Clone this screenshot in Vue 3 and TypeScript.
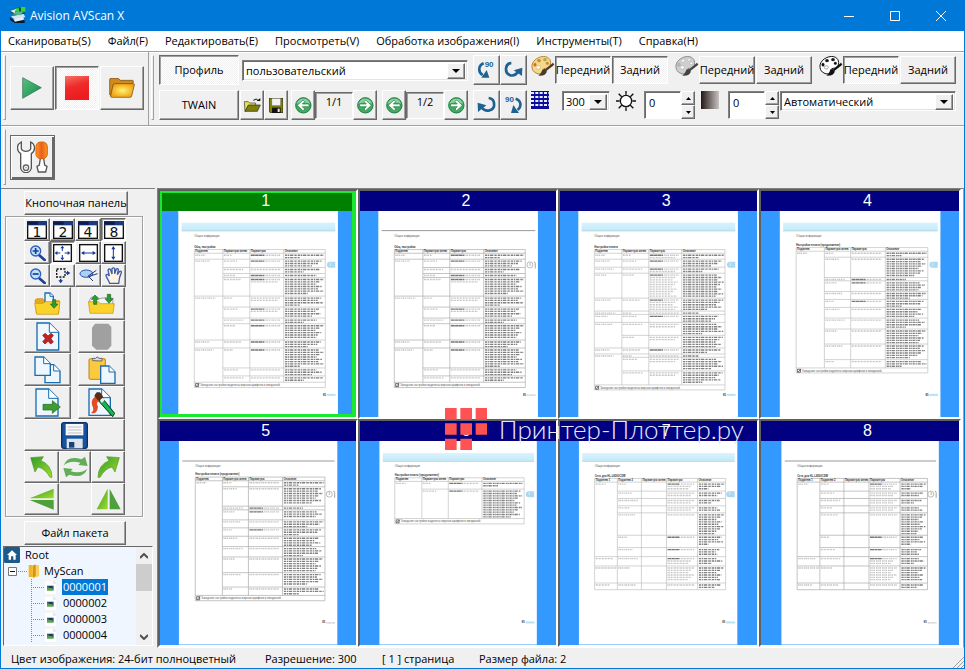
<script setup lang="ts">
import { ref } from 'vue'

interface Icon { w: number; h: number; body: string }
interface Row { y: number; full?: boolean; c3?: number; bold?: boolean }
interface Sheet {
  w: number; h: number; colour: boolean; title: string; titleY: number; infoY: number
  bandY: number; tabY: number; footY: number; cols: number[]; heads: string[]
  rows: Row[]; end: number; note: number
}

const sheetOutline = (x: number, y: number, w: number, h: number, f: number): string =>
  `<path d="M${x} ${y}h${w - f}l${f} ${f}v${h - f}h-${w}z" fill="#eef7ff" stroke="#1b6cae" stroke-width="4"/>` +
  `<path d="M${x + w - f} ${y}v${f}h${f}" fill="#fff" stroke="#1b6cae" stroke-width="3"/>`

const arrowBall = (d: string): string =>
  `<circle cx="25" cy="25" r="23" fill="#45a765" stroke="#17803a" stroke-width="3"/><path d="M5 20a21 21 0 0 1 40 0q-20-9-40 0z" fill="#8fcfa3"/><path d="${d}" fill="#fff" stroke="#17803a" stroke-width="2"/>`

const palette = (base: string, a: string, b: string, c: string, edge: string, brush: string): string =>
  `<path d="M3 34C0 14 26-2 44 2c16 4 18 20 11 30-7 8-18 2-20 10-1 12-12 14-20 9C8 48 4 42 3 34z" fill="${base}" stroke="${edge}" stroke-width="3"/>
  <ellipse cx="24" cy="14" rx="5" ry="4" fill="${a}" stroke="${edge}"/><ellipse cx="42" cy="11" rx="5" ry="4" fill="${b}" stroke="${edge}"/>
  <ellipse cx="12" cy="26" rx="4" ry="5" fill="${c}" stroke="${edge}"/><ellipse cx="49" cy="22" rx="4" ry="4" fill="${a}" stroke="${edge}"/><ellipse cx="22" cy="34" rx="6" ry="5" fill="#fff" stroke="${edge}"/>
  <path d="M66 20L41 41l4 5 25-20z" fill="${brush}"/><path d="M41 39l6 8q-6 14-24 11 8-4 9-10 2-8 9-9z" fill="${brush}" stroke="#222"/>`

const viewIcon = (n: string): Icon => ({
  w: 20, h: 18,
  body: `<rect x="2" y="2" width="56" height="50" fill="#fff" stroke="#111" stroke-width="4"/><rect x="0" y="0" width="60" height="13" fill="#1b3a7c"/><path d="M0 2h32v9H0z" fill="#0c1c50"/><text x="30" y="47" text-anchor="middle" font-family="DejaVu Sans, sans-serif" font-size="42" fill="#111">${n}</text>`,
})

const lens = (sign: string): string =>
  `<path d="M30 30L47 45" stroke="#1d3f9a" stroke-width="8" stroke-linecap="round"/><circle cx="20" cy="18" r="15" fill="#bfe0fb" stroke="#2c5fc0" stroke-width="4"/><path d="${sign}" stroke="#173c9c" stroke-width="5" fill="none"/>`

const openFolder = `<path d="M3 24l6-4h18l5 6h44l-2 38H7z" fill="#e5ab1a" stroke="#c58a0a" stroke-width="2"/>`

const icons: Record<string, Icon> = {
  app: { w: 17, h: 17, body: '<path d="M2 14L24 2h18l6 18-30 6z" fill="#1b4a44"/><path d="M4 12l18-7-5 14z" fill="#d8f4e4"/><path d="M20 4h10v9h-9zM36 0h13v14H36z" fill="#2fd83c"/><path d="M6 28l38-7 5 9-30 10z" fill="#cfe4f6"/><path d="M2 30l12 10h33v8H18L4 40z" fill="#0c1828"/><path d="M14 38l30-7v7l-26 6z" fill="#e9f2fb"/><path d="M10 22l14-10 20 3-12 10z" fill="#59b592"/>' },
  play: { w: 20, h: 22, body: '<defs><linearGradient id="gp" x2="1" y2="1"><stop stop-color="#5cc086"/><stop offset="1" stop-color="#0e8d45"/></linearGradient></defs><path d="M2 2L58 32 2 64z" fill="url(#gp)" stroke="#2f6b48" stroke-width="2"/>' },
  stop: { w: 24, h: 24, body: '<defs><linearGradient id="gs" x2=".3" y2="1"><stop stop-color="#f47565"/><stop offset=".5" stop-color="#ee2a2a"/><stop offset="1" stop-color="#ec1c20"/></linearGradient></defs><path d="M0 0h72v72H0z" fill="url(#gs)"/>' },
  folder: { w: 26, h: 20, body: '<defs><radialGradient id="gf"><stop stop-color="#fff36a"/><stop offset="1" stop-color="#f0a51c"/></radialGradient></defs><path d="M2 4q0-3 4-3h22l6 6h36q4 0 3 5l-4 16L8 56 2 50z" fill="#cf8a1c" stroke="#6b4210" stroke-width="2"/><path d="M16 17h57q4 0 3 4l-8 33q-1 4-5 4H8q-4 0-3-4l7-33q1-4 4-4z" fill="url(#gf)" stroke="#6b4210" stroke-width="2"/>' },
  tools: { w: 31, h: 32, body: '<path d="M13 3C-2 10-2 30 11 38v44q4 13 16 13t16-13V38C56 30 56 10 41 3v21q-4 7-14 7t-14-7z" fill="#fff" stroke="#555" stroke-width="4"/><circle cx="27" cy="80" r="8" fill="#fff" stroke="#666" stroke-width="4"/><circle cx="27" cy="80" r="2" fill="#666"/><path d="M70 52h10l3 20 7 4-4 17H64l-4-17 7-4z" fill="#fff" stroke="#555" stroke-width="4"/><defs><linearGradient id="gt"><stop stop-color="#ff9a16"/><stop offset=".5" stop-color="#ea5c26"/><stop offset="1" stop-color="#ff9a16"/></linearGradient></defs><rect x="57" y="3" width="34" height="50" rx="14" fill="url(#gt)" stroke="#d56810" stroke-width="3"/>' },
  open: { w: 17, h: 14, body: '<path d="M1 11h12l4 4h18v8H15L3 40z" fill="#e6e24e" stroke="#333" stroke-width="2"/><path d="M13 21h36l-9 19H3z" fill="#80800c" stroke="#222" stroke-width="2"/><path d="M28 7q9-8 16 1" fill="none" stroke="#111" stroke-width="3"/><path d="M38 9h11V0z" fill="#111"/>' },
  save: { w: 14, h: 15, body: '<path d="M0 0h42v45H5l-5-5z" fill="#80800c" stroke="#111" stroke-width="2"/><path d="M8 1h27v22H8z" fill="#f2f2f2" stroke="#222"/><path d="M9 29h26v16H9z" fill="#111"/><path d="M26 32h6v10h-6z" fill="#eee"/>' },
  prev: { w: 17, h: 17, body: arrowBall('M7 25L24 9l5 5-7 7h20v8H22l7 7-5 5z') },
  next: { w: 17, h: 17, body: arrowBall('M43 25L26 9l-5 5 7 7H8v8h20l-7 7 5 5z') },
  ccw90: { w: 17, h: 18, body: '<text x="20" y="17" font-family="Liberation Sans, sans-serif" font-weight="bold" font-size="24" fill="#20669a">90</text><path d="M17 7C0 14 0 34 14 42" fill="none" stroke="#1d6293" stroke-width="8"/><path d="M10 50h24L26 27z" fill="#1d6293"/>' },
  cw: { w: 19, h: 18, body: '<path d="M22 6C2 8 0 38 20 43q14 3 22-11" fill="none" stroke="#1d6293" stroke-width="8"/><path d="M29 28l26-8-1 25z" fill="#1d6293"/>' },
  ccw: { w: 19, h: 18, body: '<path d="M35 6C55 8 58 38 37 43q-14 3-22-8" fill="none" stroke="#1d6293" stroke-width="8"/><path d="M28 28L2 20l1 28z" fill="#1d6293"/>' },
  cw90: { w: 17, h: 18, body: '<text x="0" y="17" font-family="Liberation Sans, sans-serif" font-weight="bold" font-size="24" fill="#20669a">90</text><path d="M32 8C50 14 50 32 38 42" fill="none" stroke="#1d6293" stroke-width="8"/><path d="M42 51H18l7-24z" fill="#1d6293"/>' },
  palColour: { w: 24, h: 21, body: palette('#f3d98c', '#e57b2e', '#8ac05c', '#d86a1c', '#b98432', '#4a3a28') },
  palGrey: { w: 24, h: 21, body: palette('#cfcfcf', '#fff', '#f4f4f4', '#bbb', '#8c8c8c', '#444') },
  palMono: { w: 24, h: 21, body: palette('#fff', '#111', '#111', '#111', '#111', '#111') },
  mesh: { w: 18, h: 18, body: '<path d="M0 0h54v54H0z" fill="#0b0b9c"/><path d="M0 6h54M0 18h54M0 30h54M0 42h54" stroke="#e8ecff" stroke-width="6" stroke-dasharray="9 4"/>' },
  sun: { w: 20, h: 20, body: '<circle cx="30" cy="30" r="17" fill="#fff" stroke="#111" stroke-width="4"/><path d="M30 0v11M30 49v11M0 30h11M49 30h11M8 8l9 9M43 43l9 9M52 8l-9 9M17 43l-9 9" stroke="#111" stroke-width="4"/>' },
  zoomIn: { w: 17, h: 16, body: lens('M11 18h18M20 9v18') },
  zoomOut: { w: 17, h: 16, body: lens('M11 18h18') },
  fit: { w: 19, h: 18, body: '<rect x="2" y="2" width="53" height="50" fill="#fff" stroke="#111" stroke-width="4"/><path d="M28 9v12M28 33v12M9 27h13M35 27h13" stroke="#14389c" stroke-width="3"/><path d="M28 5l-6 8h12zM28 49l-6-8h12zM5 27l8-6v12zM52 27l-8-6v12z" fill="#14389c"/>' },
  fitW: { w: 19, h: 18, body: '<rect x="2" y="2" width="53" height="50" fill="#fff" stroke="#111" stroke-width="4"/><path d="M9 27h38" stroke="#14389c" stroke-width="3"/><path d="M6 27l10-6v12zM51 27l-10-6v12z" fill="#14389c"/>' },
  fitH: { w: 19, h: 18, body: '<rect x="2" y="2" width="53" height="50" fill="#fff" stroke="#111" stroke-width="4"/><path d="M28 9v36" stroke="#14389c" stroke-width="3"/><path d="M28 6l-6 10h12zM28 48l-6-10h12z" fill="#14389c"/>' },
  crop: { w: 16, h: 16, body: '<rect x="5" y="3" width="25" height="24" fill="none" stroke="#111" stroke-width="4" stroke-dasharray="6 4"/><path d="M32 15h10M17 32v8" stroke="#14389c" stroke-width="4"/><path d="M46 15l-10-7v14zM17 46l-7-9h14z" fill="#14389c"/>' },
  lasso: { w: 19, h: 13, body: '<ellipse cx="22" cy="14" rx="19" ry="11" fill="#a9d2f6" stroke="#2c4fae" stroke-width="3"/><path d="M26 22l26-18M30 22l26-8M28 22l14 14" stroke="#26357a" stroke-width="3"/>' },
  hand: { w: 18, h: 17, body: '<path d="M14 49C12 40 2 30 3 24q4-5 10 3L9 9q4-6 8 0l4 12V5q4-5 8 0v15l5-14q5-3 6 2l-3 15 7-10q6-2 5 4-6 12-8 32z" fill="#fff3e2" stroke="#3f5ea8" stroke-width="4"/>' },
  insert: { w: 27, h: 24, body: openFolder + sheetOutline(33, 3, 25, 38, 10) + '<path d="M2 34h24l8-5h44l-5 38H8z" fill="#fbd12c" stroke="#c5920c" stroke-width="2"/><path d="M56 23h9v13h7L60 49 49 36h7z" fill="#2f9a33" stroke="#14691c" stroke-width="2"/>' },
  replace: { w: 27, h: 22, body: '<path d="M5 20l6-8 18 0 4 5 18-3 24 2-2 38H8z" fill="#f3f3f3" stroke="#777" stroke-width="2"/><path d="M1 26h30l6 6h42l-4 29H6z" fill="#fbd12c" stroke="#c5920c" stroke-width="2"/><path d="M17 34V19h-7L21 6l11 13h-6v15zM58 4h10v13h7L63 31 51 17h7z" fill="#2f9a33" stroke="#14691c" stroke-width="2"/>' },
  remove: { w: 24, h: 29, body: sheetOutline(3, 3, 65, 81, 28) + '<path d="M20 40l8-6 8 8 9-8 7 6-7 10 7 10-8 6-8-8-9 8-7-7 8-9z" fill="#c42222" stroke="#8d1010" stroke-width="2"/>' },
  blank: { w: 21, h: 27, body: '<path d="M12 2h40l9 10v56L50 80H16L3 68V14z" fill="#a0a0a0"/>' },
  copy: { w: 27, h: 28, body: sheetOutline(33, 26, 45, 54, 19) + sheetOutline(3, 3, 46, 55, 20) },
  paste: { w: 28, h: 28, body: '<rect x="3" y="8" width="49" height="62" rx="4" fill="#fbc93e" stroke="#b88418" stroke-width="3"/><path d="M14 14V7h9q4-9 10 0h9v8z" fill="#ddd" stroke="#666" stroke-width="3"/>' + sheetOutline(38, 30, 43, 52, 18) },
  exportPage: { w: 26, h: 29, body: sheetOutline(3, 3, 66, 81, 28) + '<path d="M24 49h28V38l24 19-24 19V66H24z" fill="#3f9c31" stroke="#1e6a1b" stroke-width="2"/>' },
  paint: { w: 27, h: 29, body: sheetOutline(3, 3, 64, 79, 26) + '<path d="M9 75q12-9 3-24-4-22 16-27l9 12q-16 7-7 20-3 24-21 19z" fill="#e54b1e"/><path d="M26 14l10 0 9 14-12 10-13-14z" fill="#5f2b12" stroke="#222" stroke-width="2"/><path d="M43 30l37 46-6 10-42-47z" fill="#19b553" stroke="#0a3d1c" stroke-width="3"/><path d="M36 36l8-7 6 7-9 9z" fill="#eee"/>' },
  disk: { w: 27, h: 27, body: '<rect x="2" y="2" width="77" height="77" rx="7" fill="#1653a0" stroke="#0d2f66" stroke-width="4"/><path d="M14 6h53v34H14z" fill="#f8f8f8"/><path d="M20 15h42M20 24h42M20 33h42" stroke="#b9c3cf" stroke-width="3"/><path d="M17 50h48v29H17z" fill="#dfe4ea"/><path d="M24 60h16v17H24z" fill="#17427d"/>' },
  left: { w: 23, h: 22, body: '<path d="M2 5l38-3-7 12q32 12 33 50h-6Q46 38 24 33l-9 15z" fill="url(#leaf)" stroke="#4c9c1c" stroke-width="2"/>' },
  right: { w: 23, h: 22, body: '<path d="M67 5L29 2l7 12Q4 26 3 64h6q14-26 36-31l9 15z" fill="url(#leaf)" stroke="#4c9c1c" stroke-width="2"/>' },
  swap: { w: 25, h: 22, body: '<path d="M2 28Q14-4 56 10l10-8 8 28-28-3 6-7Q20 12 2 28z" fill="#62ad55"/><path d="M73 38Q61 70 19 56L9 64 1 36l28 3-6 7q32 8 50-8z" fill="#62ad55"/>' },
  flipV: { w: 25, h: 22, body: '<path d="M74 2v29H2z" fill="url(#leaf)"/><path d="M74 65V36H2z" fill="#4f9f3c"/>' },
  flipH: { w: 25, h: 22, body: '<path d="M2 64h33V2z" fill="url(#leaf)"/><path d="M74 64H41V2z" fill="#4f9f3c"/>' },
  home: { w: 16, h: 16, body: '<rect width="48" height="48" rx="4" fill="#1d5a8c"/><path d="M24 10L9 24h5v14h7V28h7v10h7V24h4z" fill="#fff"/>' },
  book: { w: 12, h: 14, body: '<path d="M2 3h13v36H2z" fill="#f0b52a"/><path d="M13 3h20v34l-18 5z" fill="#f7cf5c"/><path d="M15 5v36l8-5V1z" fill="#d99212"/>' },
  scan: { w: 13, h: 15, body: '<path d="M1 1h26l11 10v33H1z" fill="#fff" stroke="#dde3e6"/><path d="M27 1v10h11z" fill="#dfe6ea"/><rect x="9" y="17" width="20" height="13" fill="#38699c"/><path d="M9 25l8-4 12 8v3H9z" fill="#5fa04c"/><path d="M14 19h12v4H14z" fill="#123"/>' },
}
;['1', '2', '4', '8'].forEach((n) => { icons['view' + n] = viewIcon(n) })

const menus = ['Сканировать(S)', 'Файл(F)', 'Редактировать(E)', 'Просмотреть(V)', 'Обработка изображения(I)', 'Инструменты(T)', 'Справка(H)']
const scanButtons = [
  { icon: 'play', label: 'Сканировать', on: false },
  { icon: 'stop', label: 'Стоп', on: true },
  { icon: 'folder', label: 'Открыть папку', on: false },
]
const rotations = [
  { icon: 'ccw90', label: 'Повернуть влево на 90' }, { icon: 'cw', label: 'Повернуть вправо' },
  { icon: 'ccw', label: 'Повернуть влево' }, { icon: 'cw90', label: 'Повернуть вправо на 90' },
]
const sides = [
  { icon: 'palColour', front: true, back: true },
  { icon: 'palGrey', front: false, back: false },
  { icon: 'palMono', front: true, back: false },
]
const viewTools = [
  'view1', 'view2', 'view4', 'view8', 'zoomIn', 'fit', 'fitW', 'fitH', 'zoomOut', 'crop', 'lasso', 'hand',
]
const pressedTools = ['view8', 'fit']
const pageTools = ['insert', 'replace', 'remove', 'blank', 'copy', 'paste', 'exportPage', 'paint']
const turnTools = ['left', 'swap', 'right', 'flipV', '', 'flipH']
const files = ['0000001', '0000002', '0000003', '0000004']

const profile = ref('пользовательский')
const dpi = ref('300')
const mode = ref('Автоматический')
const brightness = ref('0')
const contrast = ref('0')
const selected = ref(1)
const selectedFile = ref('0000001')

const step = (v: string, d: number): string => String(Number(v) + d)

const four = ['Подменю', 'Параметры меню', 'Параметры', 'Описание']
const five = ['Подменю 1', 'Подменю 2', 'Параметры меню', 'Параметры', 'Описание']

const general: Row[] = [
  { y: 127, full: true, c3: 1, bold: true }, { y: 145, full: true, c3: 1, bold: true }, { y: 170, c3: 1 },
  { y: 188, c3: 1, bold: true }, { y: 200, c3: 2, bold: true }, { y: 256, full: true, c3: 2 },
  { y: 289, c3: 2, bold: true }, { y: 322, c3: 1, bold: true }, { y: 339, c3: 1, bold: true },
  { y: 388, full: true, c3: 1, bold: true }, { y: 412, full: true, c3: 1, bold: true }, { y: 472, c3: 1 }, { y: 496, c3: 1 },
]
const printing: Row[] = [
  { y: 127, full: true, c3: 2, bold: true }, { y: 145, full: true, c3: 1, bold: true }, { y: 169, full: true, c3: 2, bold: true },
  { y: 187, full: true, c3: 10, bold: true }, { y: 262, full: true, c3: 5, bold: true }, { y: 301, full: true, c3: 1 },
  { y: 311, full: true, c3: 1, bold: true }, { y: 335, full: true, c3: 2 }, { y: 374, c3: 2 },
  { y: 412, full: true, c3: 1, bold: true }, { y: 430, full: true, c3: 1 }, { y: 440, c3: 2 }, { y: 481, c3: 2 },
]
const continued = (ys: number[]): Row[] =>
  ys.map((y, i) => ({ y, full: i === 0, c3: 1, bold: i === 2 || i === 3 || i === 5 }))
const network: Row[] = [
  { y: 123, full: true, c3: 3, bold: true }, { y: 150, c3: 2 }, { y: 172, c3: 2 }, { y: 194, c3: 2 }, { y: 215, c3: 1 },
  { y: 282, c3: 1, bold: true }, { y: 319, c3: 1, bold: true }, { y: 346, full: true, c3: 3, bold: true },
  { y: 374, full: true, c3: 6 }, { y: 425, full: true, c3: 1 },
]

const upper = { h: 621, infoY: 79, bandY: 35, tabY: 153, footY: 556 }
const lower = { h: 609, infoY: 77, bandY: 36, tabY: 150, footY: 546 }
const fourCols = [48, 134, 215, 317, 442]

const sheets: Sheet[] = [
  { ...upper, w: 480, colour: true, title: 'Общ. настройки', titleY: 110, cols: fourCols, heads: four, rows: general, end: 515, note: 531 },
  { ...upper, w: 480, colour: false, title: 'Общ. настройки', titleY: 110, cols: fourCols, heads: four, rows: general, end: 515, note: 531 },
  { ...upper, w: 480, colour: true, title: 'Настройки печати', titleY: 112, cols: [48, 131, 212, 311, 441], heads: four, rows: printing, end: 523, note: 538 },
  { ...upper, w: 483, colour: true, title: 'Настройки печати (продолжение)', titleY: 105, cols: [49, 134, 213, 317, 445], heads: four, rows: continued([121, 139, 200, 210, 242, 266, 290, 322, 355, 400, 447]), end: 472, note: 487 },
  { ...lower, w: 474, colour: false, title: 'Настройки печати (продолжение)', titleY: 103, cols: [49, 130, 208, 310, 437], heads: four, rows: continued([119, 137, 195, 206, 236, 260, 285, 316, 347, 394, 437]), end: 462, note: 478 },
  { ...lower, w: 471, colour: true, title: 'Настройки печати (продолжение)', titleY: 105, cols: [46, 127, 206, 307, 433], heads: four, rows: [{ y: 121, full: true, c3: 1, bold: true }, { y: 144, c3: 1, bold: true }], end: 232, note: 248 },
  { ...lower, w: 474, colour: true, title: 'Сеть для HL-L8260CDW', titleY: 107, cols: [47, 115, 187, 262, 355, 439], heads: five, rows: network, end: 445, note: 0 },
  { ...lower, w: 471, colour: false, title: 'Сеть для HL-L8260CDW', titleY: 107, cols: [47, 115, 187, 262, 355, 437], heads: five, rows: network, end: 445, note: 0 },
]

const gridPath = (s: Sheet): string => {
  const l = s.cols[0], r = s.cols[s.cols.length - 1]
  const top = s.rows[0].y - 11
  let d = `M${l} ${top}H${r}M${l} ${s.end}H${r}`
  s.rows.forEach((row) => { d += `M${row.full ? l : s.cols[1]} ${row.y}H${r}` })
  s.cols.forEach((x, i) => {
    const edge = i === 0 || i === s.cols.length - 1
    d += `M${x} ${top}V${edge && s.note ? s.note : s.end}`
  })
  if (s.note) d += `M${l} ${s.note}H${r}`
  return d
}

const strokes = (s: Sheet, kind: 'light' | 'bold' | 'desc'): string => {
  const n = s.cols.length
  const dx = s.cols[n - 2], dw = s.cols[n - 1] - dx
  const cx = s.cols[n - 3], cw = dx - cx
  let d = ''
  s.rows.forEach((row, i) => {
    const next = i + 1 < s.rows.length ? s.rows[i + 1].y : s.end
    if (kind === 'desc') {
      const count = Math.max(1, Math.floor((next - row.y - 3) / 7))
      for (let k = 0; k < count; k++) {
        const len = k === count - 1 ? dw * (0.35 + ((i * 3) % 5) / 10) : dw - 8 - ((i * 7 + k * 11) % 27)
        d += `M${dx + 4} ${row.y + 6 + k * 7}h${Math.round(len)}`
      }
    } else if (kind === 'bold') {
      if (row.bold) d += `M${cx + 3} ${row.y + 6}h${Math.round(cw * 0.4)}`
    } else {
      if (row.full) d += `M${s.cols[0] + 3} ${row.y + 6}h${30 + ((i * 13) % 35)}`
      d += `M${s.cols[1] + 3} ${row.y + 6}h${24 + ((i * 17) % 42)}`
      for (let k = 0; k < (row.c3 ?? 0); k++) {
        const from = row.bold && k === 0 ? Math.round(cw * 0.4) + 6 : 3
        d += `M${cx + from} ${row.y + 6 + k * 7}h${Math.round(cw * 0.9) - from - ((k * 9) % 25)}`
      }
    }
  })
  return d
}
</script>

<template>
  <div class="window">
    <svg class="defs" aria-hidden="true">
      <defs>
        <linearGradient id="leaf" x2="1" y2="1"><stop stop-color="#2f9a2c" /><stop offset="1" stop-color="#a4dc2a" /></linearGradient>
        <linearGradient id="band" x2="0" y2="1"><stop stop-color="#d9f3fd" /><stop offset="1" stop-color="#c3e9f8" /></linearGradient>
      </defs>
    </svg>

    <header class="titlebar">
      <svg class="icon" width="17" height="17" viewBox="0 0 51 51" v-html="icons.app.body" />
      <h1>Avision AVScan X</h1>
      <button type="button" aria-label="Свернуть"><svg width="10" height="10"><path d="M0 5.5h10" /></svg></button>
      <button type="button" aria-label="Развернуть"><svg width="10" height="10"><path d="M.5.5h9v9h-9z" /></svg></button>
      <button type="button" aria-label="Закрыть"><svg width="10" height="10"><path d="M0 0l10 10M10 0L0 10" /></svg></button>
    </header>

    <nav class="menu"><button v-for="m in menus" :key="m" type="button">{{ m }}</button></nav>

    <div class="rebar">
      <div class="band">
        <span class="grip" />
        <div class="scan">
          <button v-for="b in scanButtons" :key="b.icon" type="button" class="btn" :class="{ down: b.on }" :aria-label="b.label">
            <svg :width="icons[b.icon].w" :height="icons[b.icon].h" :viewBox="`0 0 ${icons[b.icon].w * 3} ${icons[b.icon].h * 3}`" v-html="icons[b.icon].body" />
          </button>
        </div>
      </div>
      <div class="band main">
        <span class="grip" />
        <div class="profile">
          <div class="line first">
            <button type="button" class="btn down wide">Профиль</button>
            <div class="combo grow">
              <select v-model="profile" aria-label="Профиль"><option>пользовательский</option></select>
              <span class="drop"><svg width="8" height="4"><path d="M0 0h8L4 4z" /></svg></span>
            </div>
          </div>
          <div class="line">
            <button type="button" class="btn wide">TWAIN</button>
            <button type="button" class="btn sq" aria-label="Открыть"><svg width="17" height="14" viewBox="0 0 51 42" v-html="icons.open.body" /></button>
            <button type="button" class="btn sq" aria-label="Сохранить"><svg width="14" height="15" viewBox="0 0 42 45" v-html="icons.save.body" /></button>
            <div v-for="c in ['1/1', '1/2']" :key="c" class="pager">
              <button type="button" class="btn sq" aria-label="Назад"><svg width="17" height="17" viewBox="0 0 51 51" v-html="icons.prev.body" /></button>
              <output>{{ c }}</output>
              <button type="button" class="btn sq" aria-label="Вперёд"><svg width="17" height="17" viewBox="0 0 51 51" v-html="icons.next.body" /></button>
            </div>
          </div>
        </div>
        <div class="rotate">
          <button v-for="r in rotations" :key="r.icon" type="button" class="btn" :aria-label="r.label">
            <svg :width="icons[r.icon].w" :height="icons[r.icon].h" :viewBox="`0 0 ${icons[r.icon].w * 3} ${icons[r.icon].h * 3}`" v-html="icons[r.icon].body" />
          </button>
        </div>
        <div class="image">
          <div class="line sides">
            <div v-for="s in sides" :key="s.icon" class="side">
              <svg width="24" height="21" viewBox="0 0 72 63" v-html="icons[s.icon].body" />
              <button type="button" class="btn" :class="{ down: s.front }">Передний</button>
              <button type="button" class="btn" :class="{ down: s.back }">Задний</button>
            </div>
          </div>
          <div class="line settings">
            <svg width="18" height="18" viewBox="0 0 54 54" v-html="icons.mesh.body" />
            <div class="combo dpi">
              <select v-model="dpi" aria-label="Разрешение"><option>300</option></select>
              <span class="drop"><svg width="8" height="4"><path d="M0 0h8L4 4z" /></svg></span>
            </div>
            <svg class="sun" width="20" height="20" viewBox="0 0 60 60" v-html="icons.sun.body" />
            <div class="spin">
              <input v-model="brightness" type="text" aria-label="Яркость">
              <button type="button" class="btn" aria-label="Больше" @click="brightness = step(brightness, 1)"><svg width="5" height="3"><path d="M0 3h5L2.500 0z" /></svg></button>
              <button type="button" class="btn" aria-label="Меньше" @click="brightness = step(brightness, -1)"><svg width="5" height="3"><path d="M0 0h5L2.500 3z" /></svg></button>
            </div>
            <span class="shade" />
            <div class="spin second">
              <input v-model="contrast" type="text" aria-label="Контраст">
              <button type="button" class="btn" aria-label="Больше" @click="contrast = step(contrast, 1)"><svg width="5" height="3"><path d="M0 3h5L2.500 0z" /></svg></button>
              <button type="button" class="btn" aria-label="Меньше" @click="contrast = step(contrast, -1)"><svg width="5" height="3"><path d="M0 0h5L2.500 3z" /></svg></button>
            </div>
            <div class="combo grow">
              <select v-model="mode" aria-label="Режим"><option>Автоматический</option></select>
              <span class="drop"><svg width="8" height="4"><path d="M0 0h8L4 4z" /></svg></span>
            </div>
          </div>
        </div>
      </div>
    </div>

    <div class="rebar options">
      <span class="grip" />
      <button type="button" class="btn focus" aria-label="Настройки"><svg width="31" height="32" viewBox="0 0 93 96" v-html="icons.tools.body" /></button>
    </div>

    <div class="work">
      <aside class="panel">
        <button type="button" class="btn caption">Кнопочная панель</button>
        <div class="tools">
          <div class="views">
            <button v-for="t in viewTools" :key="t" type="button" class="btn" :class="{ down: pressedTools.includes(t) }" :aria-label="t">
              <svg :width="icons[t].w" :height="icons[t].h" :viewBox="`0 0 ${icons[t].w * 3} ${icons[t].h * 3}`" v-html="icons[t].body" />
            </button>
          </div>
          <div class="pages">
            <button v-for="t in pageTools" :key="t" type="button" class="btn" :aria-label="t">
              <svg :width="icons[t].w" :height="icons[t].h" :viewBox="`0 0 ${icons[t].w * 3} ${icons[t].h * 3}`" v-html="icons[t].body" />
            </button>
            <button type="button" class="btn disk" aria-label="Сохранить"><svg width="27" height="27" viewBox="0 0 81 81" v-html="icons.disk.body" /></button>
          </div>
          <div class="turns">
            <template v-for="t in turnTools" :key="t">
              <button v-if="t" type="button" class="btn" :aria-label="t">
                <svg :width="icons[t].w" :height="icons[t].h" :viewBox="`0 0 ${icons[t].w * 3} ${icons[t].h * 3}`" v-html="icons[t].body" />
              </button>
              <span v-else />
            </template>
          </div>
        </div>
        <button type="button" class="btn caption batch">Файл пакета</button>
        <div class="tree">
          <ul>
            <li class="root"><svg width="16" height="16" viewBox="0 0 48 48" v-html="icons.home.body" />Root</li>
            <li class="branch">
              <svg width="20" height="16"><path d="M.5.5h8v8h-8z" fill="#fff" stroke="#777" transform="translate(0 4)" /><path d="M2 8.500h5" stroke="#111" /><path d="M10 8.500h10" stroke="#888" stroke-dasharray="1 1" /></svg>
              <svg width="12" height="14" viewBox="0 0 36 42" v-html="icons.book.body" />MyScan
            </li>
            <li v-for="f in files" :key="f" class="leaf">
              <svg width="13" height="16"><path d="M.5 0v16M2 8.500h11" stroke="#888" fill="none" stroke-dasharray="1 1" /></svg>
              <svg width="13" height="15" viewBox="0 0 39 45" v-html="icons.scan.body" />
              <button type="button" :class="{ chosen: f === selectedFile }" @click="selectedFile = f">{{ f }}</button>
            </li>
          </ul>
          <div class="scroll">
            <button type="button" aria-label="Вверх"><svg width="8" height="6"><path d="M0 5l4-4 4 4" /></svg></button>
            <span class="thumb" />
            <button type="button" aria-label="Вниз"><svg width="8" height="6"><path d="M0 1l4 4 4-4" /></svg></button>
          </div>
        </div>
      </aside>

      <main class="gallery">
        <article v-for="(s, i) in sheets" :key="i" class="cell" :class="{ selected: selected === i + 1 }" @click="selected = i + 1">
          <h2>{{ i + 1 }}</h2>
          <svg class="sheet" :viewBox="`0 0 ${s.w} ${s.h}`" preserveAspectRatio="xMidYMin meet" role="img" :aria-label="s.title">
            <rect :width="s.w" :height="s.h" fill="#fff" />
            <template v-if="s.colour">
              <rect x="10" :y="s.bandY" :width="s.w - 18" height="25" fill="url(#band)" />
              <path :d="`M10 ${s.bandY + 25}H${s.w - 8}`" stroke="#a3cddd" stroke-width="2" />
              <path :d="`M${s.w - 8} ${s.tabY}h-16a9 9 0 0 0 0 18h16z`" fill="#aad8f1" />
              <rect :x="s.w - 33" :y="s.footY - 6" width="26" height="6" fill="#b6e2f4" />
            </template>
            <template v-else>
              <path :d="`M10 ${s.bandY + 24}H${s.w - 8}`" stroke="#999" stroke-width="3" />
              <path :d="`M${s.w - 12} ${s.tabY}q4 0 4 4v16`" fill="none" stroke="#777" stroke-width="2" />
              <circle :cx="s.w - 24" :cy="s.tabY + 9" r="9" fill="none" stroke="#999" stroke-width="2" />
              <path :d="`M${s.w - 33} ${s.footY - 2}h26`" stroke="#888" stroke-width="4" stroke-dasharray="3 1" opacity=".5" />
            </template>
            <text :x="s.w - 26" :y="s.tabY + 12" class="tiny" :class="{ pale: s.colour }">3</text>
            <text :x="s.w - 45" :y="s.footY" class="tiny strong">85</text>
            <text :x="s.cols[0]" :y="s.infoY" class="tiny">Общая информация</text>
            <text :x="s.cols[0]" :y="s.titleY" class="tiny strong">{{ s.title }}</text>
            <path :d="gridPath(s)" fill="none" :stroke="s.colour ? '#bdbdbd' : '#a6a6a6'" stroke-width="2" />
            <text v-for="(h, k) in s.heads" :key="k" :x="s.cols[k] + 3" :y="s.rows[0].y - 3" class="tiny strong">{{ h }}</text>
            <path :d="strokes(s, 'desc')" fill="none" stroke="#808080" stroke-width="4" stroke-dasharray="7 2 4 2 10 3 5 1 3 2" />
            <path :d="strokes(s, 'bold')" fill="none" stroke="#777" stroke-width="4" stroke-dasharray="12 1 9 1" />
            <path :d="strokes(s, 'light')" fill="none" stroke="#c3c3c3" stroke-width="4" stroke-dasharray="4 1 3 2 5 3" />
            <template v-if="s.note">
              <path :d="`M${s.cols[0] + 4} ${s.end + 4}h9v9h-9zM${s.cols[0] + 6} ${s.end + 12}l9-9`" fill="none" stroke="#333" stroke-width="2" />
              <text :x="s.cols[0] + 18" :y="s.end + 11" class="tiny">Заводские настройки выделены жирным шрифтом и звездочкой.</text>
            </template>
          </svg>
        </article>
        <div class="watermark">
          <svg width="42" height="42" viewBox="0 0 126 126"><path d="M0 0h35v35H0zM46 0h35v35H46zM92 0h34v35H92zM0 46h35v34H0zM46 46h35v34H46zM92 46h34v34H92zM0 92h35v34H0zM46 92h35v34H46z" fill="#ff5252" /></svg>
          <span>Принтер-Плоттер.ру</span>
        </div>
      </main>
    </div>

    <footer class="status">
      <span>Цвет изображения: 24-бит полноцветный</span>
      <span>Разрешение: 300</span>
      <span>[ 1 ] страница</span>
      <span>Размер файла: 2</span>
      <svg width="12" height="12"><path d="M1 12L12 1M5 12l7-7M9 12l3-3" stroke="#a0a0a0" /></svg>
    </footer>
  </div>
</template>

<style>
body { margin: 0; }
</style>

<style scoped>
.window {
  display: flex; flex-direction: column; height: 100vh; box-sizing: border-box;
  border: solid #0078d7; border-width: 0 1px 1px; background: #f0f0f0; color: #000;
  font: 11px/16px "Open Sans", "Noto Sans", sans-serif; overflow: hidden;
}
.window *, .window *::after { box-sizing: border-box; }
.defs { position: absolute; width: 0; height: 0; }
button, select, input { font: inherit; color: inherit; margin: 0; padding: 0; border-radius: 0; }
svg { display: block; flex: none; }

.titlebar { display: flex; align-items: center; flex: none; height: 31px; padding-left: 8px; background: #0078d7; color: #fff; }
.titlebar h1 { flex: 1; margin: 0 0 0 4px; font-size: 12px; font-weight: 400; }
.titlebar button { display: grid; place-items: center; width: 46px; height: 31px; border: 0; background: none; }
.titlebar path { fill: none; stroke: #fff; }

.menu { display: flex; flex: none; gap: 17px; height: 20px; padding: 0 7px; background: #fff; }
.menu button { border: 0; background: none; white-space: nowrap; }

.rebar { display: flex; flex: none; border-top: 1px solid #a0a0a0; box-shadow: inset 0 1px #fff; }
.band { display: flex; align-items: center; gap: 4px; padding: 3px 4px 5px 2px; border-right: 1px solid #a0a0a0; }
.band.main { flex: 1; gap: 5px; border: 0; }
.grip { align-self: stretch; flex: none; width: 3px; border: 1px solid; border-color: #fff #a0a0a0 #a0a0a0 #fff; }
.line { display: flex; height: 30px; }
.line.first { align-items: center; gap: 3px; }
.scan { display: flex; gap: 1px; }
.scan .btn { width: 44px; height: 44px; }

.btn {
  display: flex; align-items: center; justify-content: center; flex: none; overflow: hidden; background: #f0f0f0;
  border: 1px solid; border-color: #fff #696969 #696969 #fff; box-shadow: inset -1px -1px #a0a0a0; white-space: nowrap;
}
.btn.down {
  border-color: #696969 #fff #fff #696969; box-shadow: inset 1px 1px #a0a0a0;
  background: repeating-conic-gradient(#fff 0 25%, #f0f0f0 0 50%) 0 0 / 2px 2px;
}
.wide { width: 80px; height: 30px; }
.sq { width: 24px; height: 30px; }
.profile { display: flex; flex-direction: column; gap: 5px; }
.profile .wide + .sq { margin-left: 1px; }
.pager { display: flex; margin-left: 3px; }
.pager + .pager { margin-left: 5px; }
.pager output { width: 38px; height: 27px; margin-top: 2px; padding-top: 1px; border: 1px solid; border-color: #696969 #fff #fff #696969; box-shadow: inset 1px 1px #a0a0a0; text-align: center; }

.combo { display: grid; grid-template-columns: 1fr 18px; flex: none; height: 21px; padding: 2px; background: #fff; border: 1px solid; border-color: #808080 #fff #fff #808080; box-shadow: inset 1px 1px #696969, inset -1px -1px #e3e3e3; }
.combo select { grid-area: 1 / 1 / 2 / 3; min-width: 0; width: 100%; appearance: none; border: 0; background: none; outline: 0; padding-left: 1px; }
.drop { grid-area: 1 / 2; display: grid; place-items: center; background: #f0f0f0; border: 1px solid; border-color: #fff #696969 #696969 #fff; box-shadow: inset -1px -1px #a0a0a0; pointer-events: none; }
.grow { flex: 1; }

.rotate { display: grid; grid-template-columns: 27px 27px; grid-auto-rows: 30px; row-gap: 5px; }
.image { display: flex; flex-direction: column; gap: 5px; }
.rotate + .image { margin-left: -1px; }
.sides { gap: 7px; align-items: center; }
.side { display: flex; }
.side .btn { width: 56px; height: 28px; }
.side .btn + .btn { margin-left: 1px; }
.settings { align-items: flex-start; padding-top: 1px; }
.dpi { width: 48px; height: 20px; margin-left: 13px; }
.dpi + .sun { margin: 0 8px 0 6px; }
.spin { display: grid; grid-template-columns: 37px 14px; grid-template-rows: 14px 14px; }
.spin input { grid-row: 1 / 3; min-width: 0; height: 28px; padding: 0 0 6px 4px; border: 1px solid; border-color: #808080 #fff #fff #808080; box-shadow: inset 1px 1px #696969; background: #fff; outline: 0; }
.spin.second { margin: 0 1px 0 9px; }
.shade { width: 18px; height: 18px; margin-left: 6px; background: linear-gradient(90deg, #231815, #c8c4c4); }
.settings .grow { height: 20px; }

.options { align-items: center; padding: 3px 2px; gap: 4px; height: 63px; }
.options .focus { width: 45px; height: 45px; border: 1px solid #696969; box-shadow: inset 1px 1px #fff, inset -2px -2px #696969; }

.work { display: flex; flex: 1; min-height: 0; }
.panel { display: flex; flex-direction: column; align-items: flex-start; width: 154px; flex: none; padding: 2px 2px 2px 4px; border-top: 1px solid #808080; }
.caption { width: 104px; height: 24px; margin-left: 19px; }
.tools { width: 138px; margin: 1px 0 4px; padding: 1px 0 1px 18px; border: 1px solid #a0a0a0; box-shadow: inset 1px 1px #fff, 1px 1px #fff; }
.views { display: grid; grid-template-columns: 26px 25px 26px 25px; grid-auto-rows: 23px; }
.pages { display: grid; grid-template-columns: 47px 47px; grid-template-rows: repeat(4, 33px) 32px; column-gap: 7px; }
.pages .disk { grid-column: 1 / 3; }
.turns { display: grid; grid-template-columns: 35px 32px 34px; grid-auto-rows: 32px; }
.batch { width: 102px; }
.tree { display: flex; flex: 1; min-height: 0; align-self: stretch; border: 1px solid; border-color: #696969 #fff #fff #696969; background: #eff6ff; overflow: hidden; margin: 1px 0 0 -2px; }
.tree ul { flex: 1; min-width: 0; margin: 0; padding: 0; list-style: none; }
.tree li { display: flex; align-items: center; height: 16px; white-space: nowrap; }
.root { gap: 5px; }
.branch { padding-left: 4px; gap: 4px; }
.branch svg + svg { margin-left: -4px; }
.leaf { padding-left: 27px; }
.leaf button { border: 0; padding: 0 1px; margin-left: 5px; height: 16px; line-height: 16px; background: none; }
.leaf button.chosen { background: #0078d7; color: #fff; }
.scroll { display: grid; grid-template-rows: 17px 27px 1fr; width: 16px; flex: none; background: #f0f0f0; }
.scroll button { display: grid; place-items: center; align-self: end; height: 17px; border: 0; background: none; }
.scroll path { fill: none; stroke: #505050; stroke-width: 2; }
.thumb { background: #cdcdcd; }

.gallery { position: relative; display: grid; flex: 1; min-width: 0; margin-left: 2px; grid-template-columns: repeat(3, 200fr) 202fr; grid-template-rows: 231fr 228fr; padding: 0 2px 0 0; border: 1px solid; border-color: #808080 #a0a0a0 #fff #808080; background: #fff; }
.cell { position: relative; display: flex; flex-direction: column; min-width: 0; min-height: 0; border: 2px solid; border-color: #606060 #fff #fff #606060; background: #3399ff; }
.cell h2 { flex: none; height: 20px; margin: 0; padding-left: 15px; background: #000080; color: #fff; font: 400 16px/20px "Liberation Sans", sans-serif; text-align: center; }
.selected h2 { background: #008000; }
.selected::after { content: ""; position: absolute; inset: 0; border: solid #18e830; border-width: 2px 4px 3px 2px; }
.sheet { flex: 1; width: 100%; min-height: 0; }
.tiny { font: 8px "Liberation Sans", sans-serif; fill: #555; }
.strong { font-weight: 700; fill: #333; }
.pale { fill: #fff; }
.watermark { position: absolute; left: 36%; top: 219px; display: flex; align-items: center; gap: 12px; margin-left: -3px; color: #e8e8ff; font: 300 26px/30px Lato, sans-serif; pointer-events: none; white-space: nowrap; }

.status { display: grid; grid-template-columns: 254px 117px 97px 1fr 12px; align-items: center; flex: none; height: 20px; padding: 2px 0 0 10px; white-space: nowrap; }
.status svg { align-self: end; }
</style>
